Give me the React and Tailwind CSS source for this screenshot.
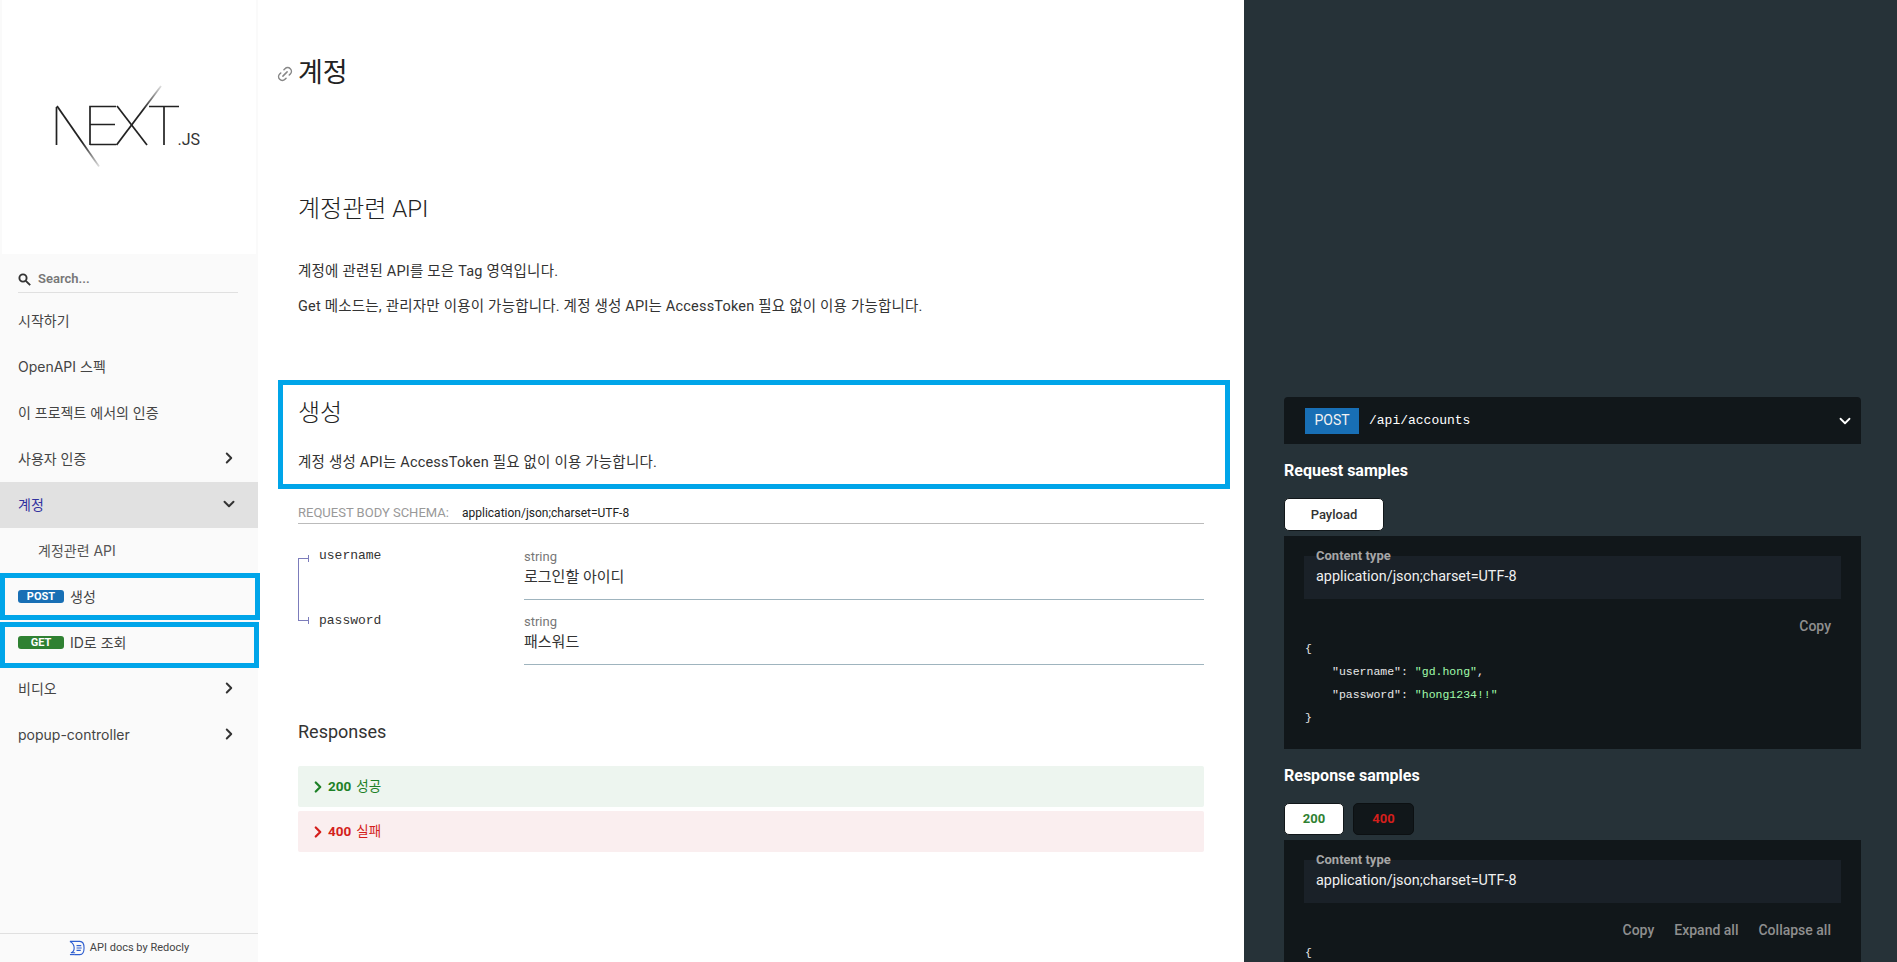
import { ChevronRight, ChevronDown, Link2 } from 'lucide-react';

const ui = { fontFamily: 'Roboto, "Noto Sans CJK KR", sans-serif' };
const nav = { fontFamily: 'Inter, "Noto Sans CJK KR", sans-serif' };
const mono = { fontFamily: '"Liberation Mono", monospace' };

function NextLogo() {
  return (
    <svg width="150" height="86" viewBox="55 85 150 86">
      <defs>
        <linearGradient id="fadeN" x1="0" y1="0" x2="0" y2="1">
          <stop offset="0.6" stopColor="#222" />
          <stop offset="1" stopColor="#222" stopOpacity="0.15" />
        </linearGradient>
        <linearGradient id="fadeX" x1="0" y1="1" x2="0" y2="0">
          <stop offset="0.6" stopColor="#222" />
          <stop offset="1" stopColor="#222" stopOpacity="0.15" />
        </linearGradient>
      </defs>
      <g fill="none" stroke="#222" strokeWidth="1.7">
        <path d="M57.5 146V108" />
        <path d="M58 107 100 167.5" stroke="url(#fadeN)" strokeWidth="1.8" />
        <path d="M91 146V107.5H117M91 125.5H116M91 145.5H117" />
        <path d="M117.5 146 162 87" stroke="url(#fadeX)" strokeWidth="1.8" />
        <path d="M118 107 148 146" />
        <path d="M150 107.5H180M165 107.5V146" />
      </g>
      <text x="178.5" y="146" fontSize="16" fill="#333" style={{ fontFamily: 'Roboto, sans-serif' }}>.JS</text>
    </svg>
  );
}

function SearchIcon() {
  return (
    <svg width="13" height="13" viewBox="0 0 13 13" fill="none" stroke="#333" strokeWidth="1.9" className="shrink-0">
      <circle cx="5" cy="5" r="3.6" />
      <path d="M7.8 7.8 12.2 12.2" />
    </svg>
  );
}

function RedoclyLogo() {
  return (
    <svg width="16" height="16" viewBox="0 0 17 17" fill="none" stroke="#2f5fd0" strokeWidth="1.2" className="shrink-0">
      <path d="M1 1.5H11.5C14.5 1.5 16 4.5 16 8.5S14.5 15.5 11.5 15.5H5.5" />
      <path d="M1 1.5C4 3 5.5 5.5 5.5 8.5S4.5 13 2 13.5H6.5" />
      <path d="M8 6H13M8 8.5H13.5M8 11H12.5" />
      <path d="M1 15.5H5.5" />
    </svg>
  );
}

function NavItem({ label, arrow, active, indent }) {
  return (
    <div className={`h-[46px] pb-[2px] flex items-center justify-between pr-[20px] text-[14px] ${indent ? 'pl-[38px] text-[#555]' : 'pl-[18px] text-[#444]'} ${active ? 'bg-[#e1e1e1]' : ''}`}>
      <span className={active ? 'text-[#32329f]' : ''}>{label}</span>
      {arrow === 'right' && <ChevronRight size={18} strokeWidth={2.6} color="#333" />}
      {arrow === 'down' && <ChevronDown size={18} strokeWidth={2.6} color="#333" />}
    </div>
  );
}

function OperationItem({ method, color, label, boxClass }) {
  return (
    <div className="relative h-[46px] pb-[2px] flex items-center pl-[18px] text-[14px] text-[#444]">
      <span className={`w-[46px] h-[13px] rounded-[3px] flex items-center justify-center text-[11px] font-bold leading-none text-white ${color}`} style={ui}>{method}</span>
      <span className="ml-[6px]">{label}</span>
      <div className={`absolute left-0 border-[5px] border-[#00a5e9] ${boxClass}`} />
    </div>
  );
}

function Sidebar() {
  return (
    <aside className="w-[258px] shrink-0 h-full bg-[#fafafa] flex flex-col" style={nav}>
      <div className="h-[254px] mx-[2px] bg-white flex items-center justify-center">
        <NextLogo />
      </div>
      <div className="mx-[18px] w-[220px] h-[39px] pt-[12px] flex items-center gap-[7px] border-b border-[#e0e0e0]">
        <SearchIcon />
        <span className="text-[13px] font-semibold text-[#777]" style={ui}>Search...</span>
      </div>
      <div className="mt-[5px]">
        <NavItem label="시작하기" />
        <NavItem label="OpenAPI 스펙" />
        <NavItem label="이 프로젝트 에서의 인증" />
        <NavItem label="사용자 인증" arrow="right" />
        <NavItem label="계정" arrow="down" active />
        <NavItem label="계정관련 API" indent />
        <OperationItem method="POST" color="bg-[#186fb5]" label="생성" boxClass="top-[-1px] w-[260px] h-[47px]" />
        <OperationItem method="GET" color="bg-[#2f8132]" label="ID로 조회" boxClass="top-[2px] w-[259px] h-[46px]" />
        <NavItem label="비디오" arrow="right" />
        <NavItem label="popup-controller" arrow="right" />
      </div>
      <div className="mt-auto h-[29px] border-t border-[#e0e0e0] flex items-center justify-center gap-[5px] text-[11px] text-[#444]" style={ui}>
        <RedoclyLogo />
        <span>API docs by Redocly</span>
      </div>
    </aside>
  );
}

function SchemaRow({ name, desc, last }) {
  return (
    <div className="flex h-[65px]">
      <div className="relative w-[226px] pl-[21px] pt-[3px] text-[13px] leading-[16px] text-[#333]" style={mono}>
        <div className={`absolute left-0 w-[11px] h-[1px] bg-[#7c7cbb] ${last ? 'top-[10px]' : 'top-[13px]'}`} />
        <div className={`absolute left-[10px] w-[1px] h-[7px] bg-[#7c7cbb] ${last ? 'top-[7px]' : 'top-[10px]'}`} />
        {!last && <div className="absolute left-0 top-[13px] bottom-0 w-[1px] bg-[#7c7cbb]" />}
        {last && <div className="absolute left-0 top-0 h-[11px] w-[1px] bg-[#7c7cbb]" />}
        {name}
      </div>
      <div className="flex-1 border-b border-[#9fb4be] pt-[4px] h-[55px] mb-[10px]">
        <div className="text-[13px] leading-[16px] text-[#777]">string</div>
        <div className="mt-[1px] text-[15px] leading-[22px] text-[#333]">{desc}</div>
      </div>
    </div>
  );
}

function ResponseBar({ code, label, barClass }) {
  return (
    <div className={`h-[41px] rounded-[2px] flex items-center pl-[11px] text-[13.5px] ${barClass}`}>
      <ChevronRight size={18} strokeWidth={3} />
      <span className="ml-[1px] font-bold">{code}</span>
      <span className="ml-[5px]">{label}</span>
    </div>
  );
}

function Main() {
  return (
    <main className="w-[986px] shrink-0 h-full bg-white text-[#333]" style={ui}>
      <div className="px-[40px]">
        <div className="relative h-[144px] pt-[54px]">
          <Link2 size={18} color="#888" strokeWidth={2} className="absolute left-[-22px] top-[65px] -rotate-45" />
          <h1 className="text-[27px] leading-[38px] font-normal text-[#222]">계정</h1>
        </div>
        <h2 className="mt-[46px] text-[24px] leading-[38px] font-light text-[#222]">계정관련 API</h2>
        <p className="mt-[34px] text-[14.5px] tracking-[0.2px] leading-[20px]">계정에 관련된 API를 모은 Tag 영역입니다.</p>
        <p className="mt-[15px] text-[14.5px] tracking-[0.2px] leading-[20px]">Get 메소드는, 관리자만 이용이 가능합니다. 계정 생성 API는 AccessToken 필요 없이 이용 가능합니다.</p>
      </div>
      <div className="mt-[63px] mx-[20px] w-[952px] h-[109px] border-[5px] border-[#00a5e9] pl-[15px]">
        <h2 className="mt-[9px] text-[24px] leading-[38px] font-light text-[#222]">생성</h2>
        <p className="mt-[21px] text-[14.5px] tracking-[0.2px] leading-[20px]">계정 생성 API는 AccessToken 필요 없이 이용 가능합니다.</p>
      </div>
      <div className="px-[40px]">
        <div className="mt-[14px] h-[21px] flex items-center border-b border-[#bbb] text-[13px]">
          <span className="text-[#999] w-[164px]">REQUEST BODY SCHEMA:</span>
          <span className="text-[12px] text-[#222]">application/json;charset=UTF-8</span>
        </div>
        <div className="mt-[21px]">
          <SchemaRow name="username" desc="로그인할 아이디" />
          <SchemaRow name="password" desc="패스워드" last />
        </div>
        <h3 className="mt-[44px] text-[18px] leading-[26px] font-normal">Responses</h3>
        <div className="mt-[21px] flex flex-col gap-[4px]">
          <ResponseBar code="200" label="성공" barClass="bg-[#edf5ef] text-[#1d8127]" />
          <ResponseBar code="400" label="실패" barClass="bg-[#faeeef] text-[#d41f1c]" />
        </div>
      </div>
    </main>
  );
}

function SampleHeader({ value, actions }) {
  return (
    <>
      <div className="relative mx-[20px] h-[43px] bg-[#1a2128] pl-[12px] pt-[10px] text-[14.4px] leading-[22px] text-[#f0f0f0]">
        <span className="absolute left-[12px] top-[-8px] text-[13px] leading-[16px] font-bold text-[#a6a6a6]">Content type</span>
        {value}
      </div>
      <div className="mt-[17px] h-[21px] pb-[1px] flex items-center justify-end gap-[20px] pr-[30px] text-[14px] font-medium text-[#8f8f8f]">
        {actions.map(a => <span key={a}>{a}</span>)}
      </div>
    </>
  );
}

function RightPanel() {
  return (
    <section className="flex-1 h-full bg-[#263238] text-white overflow-hidden pl-[40px] pr-[36px] pt-[397px]" style={ui}>
      <div className="h-[47px] bg-[#11171a] rounded-t-[4px] flex items-center pl-[21px] pr-[7px]">
        <span className="w-[54px] h-[26px] bg-[#186fb5] flex items-center justify-center text-[14px] text-[#f2f2f2]">POST</span>
        <span className="ml-[10px] text-[13px]" style={mono}>/api/accounts</span>
        <ChevronDown size={18} strokeWidth={2.4} className="ml-auto" />
      </div>
      <h3 className="mt-[16px] text-[16px] leading-[22px] font-bold">Request samples</h3>
      <div className="mt-[16px] flex">
        <span className="w-[100px] h-[33px] bg-white rounded-[5px] border border-[#11171a] flex items-center justify-center text-[13px] font-medium text-[#333]">Payload</span>
      </div>
      <div className="mt-[5px] h-[213px] bg-[#11171a] pt-[20px]">
        <SampleHeader value="application/json;charset=UTF-8" actions={['Copy']} />
        <div className="pl-[21px] text-[11.5px] leading-[23px] text-[#e8e8e8]" style={mono}>
          <div>{'{'}</div>
          <div className="pl-[27px]">"username": <span className="text-[#a0fbaa]">"gd.hong"</span>,</div>
          <div className="pl-[27px]">"password": <span className="text-[#a0fbaa]">"hong1234!!"</span></div>
          <div>{'}'}</div>
        </div>
      </div>
      <h3 className="mt-[16px] text-[16px] leading-[22px] font-bold">Response samples</h3>
      <div className="mt-[16px] flex gap-[9px]">
        <span className="w-[60px] h-[32px] bg-white rounded-[5px] border border-[#11171a] flex items-center justify-center text-[13px] font-bold text-[#2f8132]">200</span>
        <span className="w-[61px] h-[32px] bg-[#11171a] rounded-[5px] border border-[#0c1012] flex items-center justify-center text-[13px] font-bold text-[#d41f1c]">400</span>
      </div>
      <div className="mt-[5px] h-[200px] bg-[#11171a] pt-[20px]">
        <SampleHeader value="application/json;charset=UTF-8" actions={['Copy', 'Expand all', 'Collapse all']} />
        <div className="pl-[21px] text-[11.5px] leading-[23px] text-[#e8e8e8]" style={mono}>{'{'}</div>
      </div>
    </section>
  );
}

export default function App() {
  return (
    <div className="flex h-[962px] overflow-hidden">
      <Sidebar />
      <Main />
      <RightPanel />
    </div>
  );
}
